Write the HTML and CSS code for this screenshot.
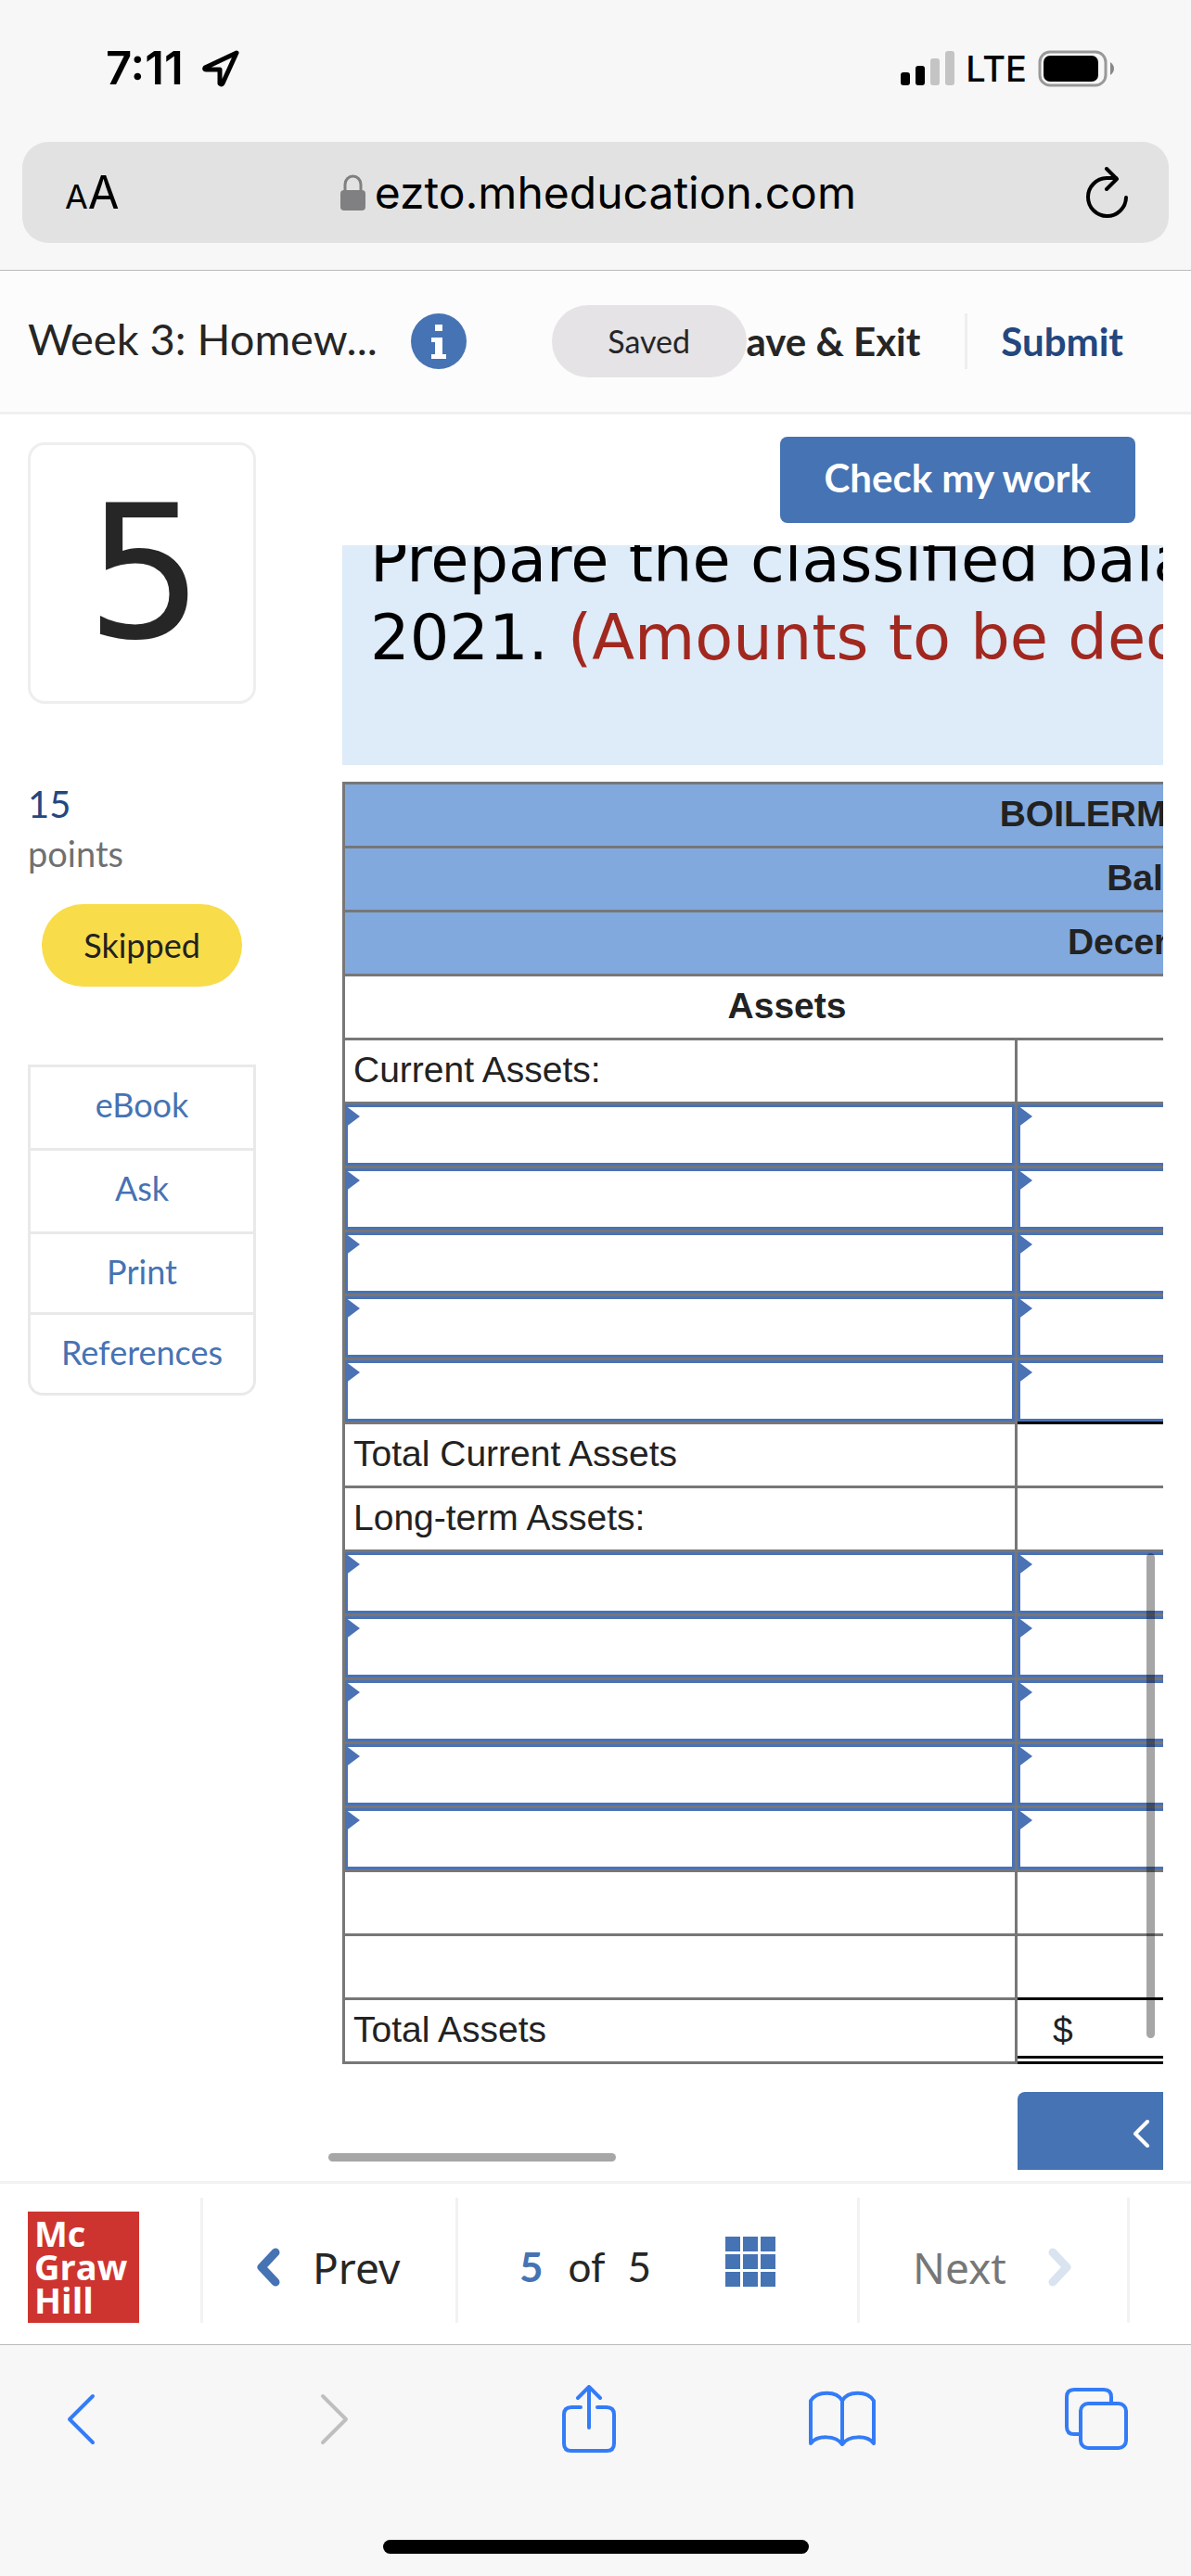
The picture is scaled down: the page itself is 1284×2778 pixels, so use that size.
FILE: index.html
```html
<!DOCTYPE html>
<html lang="en">
<head>
    <meta charset="UTF-8">
    <meta name="viewport" content="width=device-width, initial-scale=1.0">
    <title>Week 3: Homework</title>
    <link rel="stylesheet" href="styles.css">
</head>
<body>

    <div class="browser-top">
        <div class="status-bar">
            <span class="time">7:11</span>
            <svg class="location" width="42" height="42" viewBox="0 0 42 42" fill="none" stroke="#000" stroke-width="5" stroke-linejoin="round"><path d="M38 4 L4 20 Q3 22 5 22 L20 22 L20 37 Q22 39 23 37 Z"/></svg>
            <span class="status-right">
                <svg width="58" height="38" viewBox="0 0 58 38">
                    <rect x="0" y="23" width="10" height="14" rx="3"/>
                    <rect x="16" y="16" width="10" height="21" rx="3"/>
                    <rect x="32" y="8" width="10" height="29" rx="3" fill="#c4c4c4"/>
                    <rect x="48" y="0" width="10" height="37" rx="3" fill="#c4c4c4"/>
                </svg>
                <span class="network">LTE</span>
                <svg width="83" height="40" viewBox="0 0 83 40">
                    <rect x="2" y="2" width="71" height="36" rx="11" fill="none" stroke="#999" stroke-width="3"/>
                    <rect x="6" y="6" width="59" height="28" rx="7"/>
                    <path d="M78 13 Q82 16 82 20 Q82 24 78 27 Z" fill="#888"/>
                </svg>
            </span>
        </div>
        <div class="address-bar">
            <button class="reader" aria-label="Page settings"><span class="small-a">A</span><span class="big-a">A</span></button>
            <div class="address">
                <svg width="27" height="40" viewBox="0 0 27 40"><rect x="0" y="17" width="27" height="22" rx="4" fill="#808082"/><path d="M5 18 V11 a8.500 9 0 0 1 17 0 V18" fill="none" stroke="#808082" stroke-width="3"/></svg>
                <span>ezto.mheducation.com</span>
            </div>
            <button class="reload" aria-label="Reload">
                <svg width="46" height="56" viewBox="0 0 46 56" fill="none" stroke="#000" stroke-width="4" stroke-linecap="round" stroke-linejoin="round"><path d="M43 33 A20.500 20.500 0 1 1 22 12 H32"/><path d="M22 2 L33 13 L22 24"/></svg>
            </button>
        </div>
    </div>

    <header class="header">
        <h1 class="title">Week 3: Homew...</h1>
        <button class="info" aria-label="Information">
            <svg width="60" height="60" viewBox="0 0 60 60"><circle cx="30" cy="30" r="30" fill="#4673b3"/><path d="M26 12 h8 v7 h-8 Z M22 26 h12 v18 h4 v5 H22 v-5 h4 V31 h-4 Z" fill="#fff"/></svg>
        </button>
        <div class="header-actions">
            <span class="saved">Saved</span>
            <button class="save-exit">Save &amp; Exit</button>
            <button class="submit">Submit</button>
        </div>
    </header>

    <main class="main">
        <aside class="sidebar">
            <div class="question-number">5</div>
            <div class="points-value">15</div>
            <div class="points-label">points</div>
            <div class="skipped">Skipped</div>
            <ul class="tools">
                <li><a href="#">eBook</a></li>
                <li><a href="#">Ask</a></li>
                <li><a href="#">Print</a></li>
                <li><a href="#">References</a></li>
            </ul>
        </aside>

        <section class="content">
            <div class="check-row"><button class="check">Check my work</button></div>
            <div class="scroller">
                <div class="prompt">
                    <p>Prepare the classified balance<br>2021. <span class="note">(Amounts to be deducted</span></p>
                </div>
                <table class="sheet">
                    <colgroup><col class="name"><col class="amount"><col class="name"><col class="amount"></colgroup>
                    <thead>
                        <tr><th colspan="4">BOILERMAKER COMPANY</th></tr>
                        <tr><th colspan="4">Balance Sheet</th></tr>
                        <tr><th colspan="4">December 31, 2021</th></tr>
                    </thead>
                    <tbody>
                        <tr><th colspan="2">Assets</th><th colspan="2">Liabilities</th></tr>
                        <tr><td>Current Assets:</td><td></td><td></td><td></td></tr>
                        <tr><td class="entry"><input type="text" aria-label="Current asset 1"></td><td class="entry"><input type="text" aria-label="Current amount 1"></td><td></td><td></td></tr>
                        <tr><td class="entry"><input type="text" aria-label="Current asset 2"></td><td class="entry"><input type="text" aria-label="Current amount 2"></td><td></td><td></td></tr>
                        <tr><td class="entry"><input type="text" aria-label="Current asset 3"></td><td class="entry"><input type="text" aria-label="Current amount 3"></td><td></td><td></td></tr>
                        <tr><td class="entry"><input type="text" aria-label="Current asset 4"></td><td class="entry"><input type="text" aria-label="Current amount 4"></td><td></td><td></td></tr>
                        <tr><td class="entry"><input type="text" aria-label="Current asset 5"></td><td class="entry sum"><input type="text" aria-label="Current amount 5"></td><td></td><td></td></tr>
                        <tr><td>Total Current Assets</td><td></td><td></td><td></td></tr>
                        <tr><td>Long-term Assets:</td><td></td><td></td><td></td></tr>
                        <tr><td class="entry"><input type="text" aria-label="Long-term asset 1"></td><td class="entry"><input type="text" aria-label="Long-term amount 1"></td><td></td><td></td></tr>
                        <tr><td class="entry"><input type="text" aria-label="Long-term asset 2"></td><td class="entry"><input type="text" aria-label="Long-term amount 2"></td><td></td><td></td></tr>
                        <tr><td class="entry"><input type="text" aria-label="Long-term asset 3"></td><td class="entry"><input type="text" aria-label="Long-term amount 3"></td><td></td><td></td></tr>
                        <tr><td class="entry"><input type="text" aria-label="Long-term asset 4"></td><td class="entry"><input type="text" aria-label="Long-term amount 4"></td><td></td><td></td></tr>
                        <tr><td class="entry"><input type="text" aria-label="Long-term asset 5"></td><td class="entry"><input type="text" aria-label="Long-term amount 5"></td><td></td><td></td></tr>
                        <tr><td></td><td></td><td></td><td></td></tr>
                        <tr><td></td><td class="sum"></td><td></td><td></td></tr>
                        <tr><td>Total Assets</td><td class="total">$</td><td></td><td></td></tr>
                    </tbody>
                </table>
                <div class="tabs-nav">
                    <button aria-label="Previous part"><svg width="19" height="30" viewBox="0 0 19 30" fill="none" stroke="#fff" stroke-width="4" stroke-linecap="round" stroke-linejoin="round"><path d="M16 2 L3 15 L16 28"/></svg></button>
                    <button aria-label="Next part"></button>
                </div>
            </div>
            <div class="scroll-y"></div>
            <div class="scroll-x"></div>
        </section>
    </main>

    <footer class="footer">
        <div class="brand"><div class="logo">Mc<br>Graw<br>Hill</div></div>
        <button class="prev">
            <svg width="28" height="44" viewBox="0 0 28 44" fill="none" stroke="#4673b3" stroke-width="9" stroke-linecap="round" stroke-linejoin="round"><path d="M22 6 L7 22 L22 38"/></svg>
            Prev
        </button>
        <div class="progress">
            <b>5</b><span class="of">of</span><span>5</span>
            <button class="grid" aria-label="All questions">
                <svg width="54" height="54" viewBox="0 0 54 54" fill="#4673b3"><path d="M0 0h16v16H0z M19 0h16v16H19z M38 0h16v16H38z M0 19h16v16H0z M19 19h16v16H19z M38 19h16v16H38z M0 38h16v16H0z M19 38h16v16H19z M38 38h16v16H38z"/></svg>
            </button>
        </div>
        <button class="next" disabled>
            Next
            <svg width="28" height="44" viewBox="0 0 28 44" fill="none" stroke="#dae3f0" stroke-width="9" stroke-linecap="round" stroke-linejoin="round"><path d="M6 6 L21 22 L6 38"/></svg>
        </button>
    </footer>

    <div class="browser-bottom">
        <nav class="toolbar">
            <button aria-label="Back"><svg width="32" height="56" viewBox="0 0 32 56"><path d="M29 3 L4 28 L29 53"/></svg></button>
            <button aria-label="Forward" class="off"><svg width="32" height="56" viewBox="0 0 32 56"><path d="M3 3 L28 28 L3 53"/></svg></button>
            <button aria-label="Share"><svg width="58" height="74" viewBox="0 0 58 74"><path d="M20 24 H10 Q2 24 2 32 V63 Q2 71 10 71 H48 Q56 71 56 63 V32 Q56 24 48 24 H38"/><path d="M29 46 V3 M17 14 L29 2 L41 14"/></svg></button>
            <button aria-label="Bookmarks"><svg width="72" height="62" viewBox="0 0 72 62"><path d="M36 11 C30 0 9 0 2 11 V57 C9 48 29 48 36 58 C43 48 63 48 70 57 V11 C63 0 42 0 36 11 V58"/></svg></button>
            <button aria-label="Tabs"><svg width="68" height="68" viewBox="0 0 68 68"><path d="M50 16 V10 Q50 2 42 2 H10 Q2 2 2 10 V42 Q2 50 10 50 H16"/><rect x="17" y="17" width="49" height="48" rx="8"/></svg></button>
        </nav>
        <div class="home-indicator"></div>
    </div>

</body>
</html>
```
FILE: styles.css
```css
* {
    box-sizing: border-box;
}
body {
    margin: 0;
    height: 100vh;
    display: flex;
    flex-direction: column;
    overflow: hidden;
    background-color: #fff;
    color: #262626;
    font-family: Lato, "Open Sans", sans-serif;
}
button {
    padding: 0;
    border: none;
    background: none;
    font: inherit;
    color: inherit;
    cursor: pointer;
}
svg {
    display: block;
}
.browser-top {
    background-color: #f7f7f7;
    border-bottom: 1px solid #bbb;
    padding: 0 24px 29px;
    font-family: Inter, sans-serif;
    color: #000;
}
.status-bar {
    display: flex;
    align-items: center;
    height: 153px;
    padding: 0 58px 6px 90px;
}
.time {
    font-size: 49px;
    font-weight: 600;
}
.location {
    margin-left: 19px;
}
.status-right {
    display: flex;
    align-items: center;
    gap: 12px;
    margin-left: auto;
}
.network {
    font-size: 38px;
    font-weight: 500;
}
.address-bar {
    display: flex;
    align-items: center;
    justify-content: space-between;
    height: 109px;
    padding: 0 43px 0 46px;
    border-radius: 28px;
    background-color: #e2e2e2;
}
.small-a {
    font-size: 36px;
}
.big-a {
    font-size: 49px;
}
.address {
    display: flex;
    align-items: center;
    gap: 10px;
    padding-right: 10px;
    font-size: 48px;
}
.header {
    display: flex;
    align-items: center;
    height: 155px;
    padding: 0 73px 0 30px;
    background-color: #fcfcfc;
    border-bottom: 3px solid #f0f0f0;
}
.title {
    margin: 0;
    padding-bottom: 6px;
    font-size: 47px;
    font-weight: 400;
}
.info {
    margin-left: 36px;
}
.header-actions {
    display: flex;
    align-items: center;
    margin-left: auto;
    font-size: 42px;
    font-weight: 700;
}
.saved {
    z-index: 1;
    width: 210px;
    margin-right: -23px;
    border-radius: 39px;
    background-color: #e5e3e6;
    font-size: 34px;
    font-weight: 400;
    line-height: 78px;
    text-align: center;
}
.submit {
    height: 60px;
    margin-left: 48px;
    padding-left: 36px;
    border-left: 3px solid #eee;
    color: #23477f;
}
.main {
    flex: 1;
    display: flex;
    min-height: 0;
}
.sidebar {
    width: 276px;
    padding: 30px 0 0 30px;
}
.question-number {
    height: 282px;
    margin-bottom: 80px;
    padding-left: 6px;
    border: 3px solid #eee;
    border-radius: 18px;
    font-family: "DejaVu Sans", sans-serif;
    font-size: 200px;
    line-height: 276px;
    text-align: center;
}
.points-value {
    color: #23477f;
    font-size: 40px;
    line-height: 56px;
}
.points-label {
    color: #707070;
    font-size: 38px;
    line-height: 50px;
}
.skipped {
    width: 216px;
    margin: 30px auto 84px;
    border-radius: 45px;
    background-color: #f8dc4a;
    color: #222;
    font-size: 36px;
    line-height: 89px;
    text-align: center;
}
.tools {
    margin: 0;
    padding: 0;
    list-style: none;
    border: 3px solid #e9e9e9;
    border-radius: 0 0 16px 16px;
    font-size: 36px;
    line-height: 80px;
    text-align: center;
}
.tools li {
    padding-bottom: 4px;
}
.tools li:nth-child(-n+2) {
    padding-bottom: 7px;
}
.tools li + li {
    border-top: 3px solid #e9e9e9;
}
.tools a {
    color: #4673b3;
    text-decoration: none;
}
.content {
    position: relative;
    flex: 1;
    display: flex;
    flex-direction: column;
    min-width: 0;
    margin: 24px 30px 12px 93px;
}
.check-row {
    padding: 0 30px 24px 0;
    text-align: right;
}
.check {
    height: 93px;
    padding: 0 48px 6px;
    border-radius: 8px;
    background-color: #4673b3;
    color: #fff;
    font-size: 42px;
    font-weight: 700;
}
.scroller {
    flex: 1;
    min-height: 0;
    overflow: hidden;
}
.prompt {
    height: 237px;
    margin-bottom: 18px;
    padding-left: 30px;
    overflow: hidden;
    background-color: #deebf8;
    color: #000;
    font-family: "DejaVu Sans", sans-serif;
    font-size: 67px;
    line-height: 84px;
    white-space: nowrap;
}
.prompt p {
    margin: -26px 0 0;
}
.note {
    color: #a1281f;
}
.sheet {
    width: 1915px;
    table-layout: fixed;
    border-spacing: 0;
    border-top: 3px solid #777;
    border-left: 3px solid #777;
    color: #222;
    font-family: "Liberation Sans", Arial, sans-serif;
    font-size: 39px;
}
.name {
    width: 725px;
}
.amount {
    width: 231px;
}
.sheet th,
.sheet td {
    position: relative;
    height: 69px;
    padding: 0 9px 2px;
    border-right: 3px solid #777;
    border-bottom: 3px solid #777;
    line-height: 46px;
}
.sheet thead th {
    background-color: #82a9de;
}
.sheet .entry {
    padding: 0;
}
.entry input {
    display: block;
    width: 100%;
    height: 66px;
    padding: 0 12px;
    border: 3px solid #4a72b5;
    background-color: #fff;
    font: inherit;
}
.entry::before {
    content: "";
    position: absolute;
    top: 1px;
    left: 0;
    border: solid transparent;
    border-width: 12px 0 12px 16px;
    border-left-color: #4a72b5;
}
.sheet .sum {
    border-bottom-color: #000;
}
.sheet .total {
    padding: 6px 0 0 38px;
    border-bottom: 9px double #000;
}
.tabs-nav {
    display: flex;
    justify-content: center;
    width: 1915px;
    margin-top: 30px;
}
.tabs-nav button {
    width: 230px;
    height: 96px;
    padding: 0 0 6px 124px;
    border-radius: 8px 0 0 8px;
    background-color: #4673b3;
}
.scroll-y,
.scroll-x {
    position: absolute;
    border-radius: 5px;
    background-color: rgba(0, 0, 0, 0.35);
}
.scroll-y {
    right: 9px;
    bottom: 142px;
    width: 9px;
    height: 523px;
}
.scroll-x {
    left: -15px;
    bottom: 9px;
    width: 310px;
    height: 9px;
}
.footer {
    display: flex;
    height: 176px;
    padding: 15px 66px 23px 30px;
    border-top: 3px solid #f2f2f2;
    font-size: 46px;
}
.footer > * {
    display: flex;
    align-items: center;
    border-right: 3px solid #f2f2f2;
}
.brand {
    width: 189px;
    align-items: flex-end;
}
.logo {
    width: 120px;
    height: 120px;
    padding: 5px 0 0 7px;
    background-color: #ce342f;
    color: #fff;
    font-family: "Open Sans", sans-serif;
    font-size: 38px;
    font-weight: 700;
    line-height: 36px;
}
.prev {
    width: 275px;
    padding: 14px 0 0 56px;
    gap: 34px;
    font-family: "Noto Sans", sans-serif;
}
.progress {
    flex: 1;
    padding: 12px 0 0 66px;
    font-size: 44px;
}
.progress b {
    color: #4673b3;
    margin-right: 27px;
}
.of {
    margin-right: 24px;
}
.grid {
    margin-left: auto;
    padding: 0 88px 10px 0;
}
.next {
    width: 291px;
    padding: 14px 0 0 57px;
    gap: 44px;
    color: #777;
    font-family: "Noto Sans", sans-serif;
}
.browser-bottom {
    display: flex;
    flex-direction: column;
    justify-content: space-between;
    height: 250px;
    padding: 43px 0 24px;
    border-top: 1px solid #bbb;
    background-color: #f7f7f7;
}
.toolbar {
    display: flex;
    align-items: center;
    justify-content: space-between;
    padding: 0 66px 0 51px;
}
.toolbar button {
    width: 72px;
}
.toolbar svg {
    margin: 0 auto;
    fill: none;
    stroke: #347cf7;
    stroke-width: 4;
    stroke-linecap: round;
    stroke-linejoin: round;
}
.toolbar .off svg {
    stroke: #bfbfbf;
}
.home-indicator {
    align-self: center;
    width: 459px;
    height: 15px;
    border-radius: 8px;
    background-color: #000;
}
```
